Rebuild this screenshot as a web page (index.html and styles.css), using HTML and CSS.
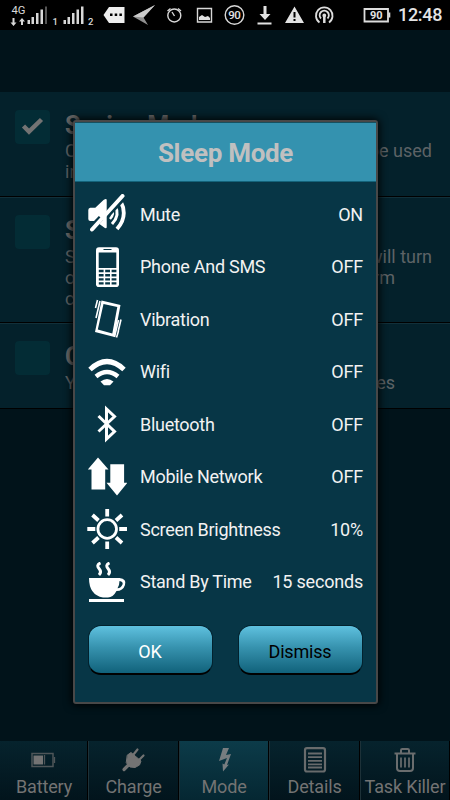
FILE: index.html
```
<!DOCTYPE html>
<html lang="en">
<head>
<meta charset="utf-8">
<title>Sleep Mode</title>
<link rel="stylesheet" href="styles.css">
</head>
<body>
<div class="screen">
  <header class="status">
    <svg class="status-icons" width="392" height="30" viewBox="0 0 392 30">
      <g fill="#d8d8d8" font-family="Roboto, sans-serif">
        <text x="11.5" y="14.300" font-size="10.500" textLength="14" lengthAdjust="spacingAndGlyphs">4G</text>
        <path d="M14.500 18v4.500h2l-3 3.500-3-3.500h2V18zM21 25v-3.500h-2l3-3.500 3 3.500h-2V25z"/>
        <path d="M27.500 20h2.500v4h-2.500zM31.500 17h2.500v7h-2.500zM36 13h2.500v11H36zM40.500 9.500H43V24h-2.500z"/>
        <path fill="#555" d="M45 6.500h2V24h-2z"/>
        <text x="52.500" y="25" font-size="9.500" font-weight="500">1</text>
        <path d="M63.500 20H66v4h-2.500zM67.500 17H70v7h-2.500zM72 13h2.500v11H72zM76.500 9.500H79V24h-2.500zM81 6.500h2.500V24H81z"/>
        <text x="88" y="25" font-size="9.500" font-weight="500">2</text>
        <path fill="#eee" d="M109 7h15.500v16H109l-5.500-8z"/>
        <path fill="#000" d="M110 13.500h2.500V16H110zM114.700 13.500h2.500V16h-2.500zM119.400 13.500h2.500V16h-2.500z"/>
        <path fill="#909090" d="M155 5l-22 11.500L148 25l-4.500-7.500z"/>
        <path fill="#ccc" d="M155 5l-22 11.500 10.500 1z"/>
      </g>
      <g fill="none" stroke="#d8d8d8" stroke-width="1.400">
        <circle cx="174.300" cy="15.500" r="6.500"/>
        <path d="M167.500 11l3-2.500M181 11l-3-2.500M172 12l2.500 4"/>
        <path d="M197.500 8.500h14v13.500h-14z"/>
        <circle cx="234.500" cy="15" r="9.300"/>
      </g>
      <path fill="#e2e2e2" d="M199 20v-3l3-2 3 2 3-1 2 2v2z"/>
      <text x="228.300" y="19" font-size="11.500" font-weight="500" fill="#e2e2e2" textLength="12.500">90</text>
      <path fill="#e2e2e2" d="M263.500 6h3v8h4l-5.500 6-5.500-6h4zM257.500 22.500h14V24.500h-14zM294.500 6.500l9.500 16.500h-19z"/>
      <path stroke="#000" stroke-width="2" d="M294.500 12v5.500M294.500 19v2"/>
      <g fill="none" stroke="#ddd" stroke-width="1.800">
        <path d="M319.500 22.500a8.300 8.300 0 1 1 9.500 0M321 18.500a4.600 4.600 0 1 1 6.500 0"/>
        <circle cx="324.300" cy="15.500" r="1" />
        <path d="M324.300 17v6" stroke-width="2.500"/>
        <path d="M364.500 9h23.500v12.500h-23.500z"/>
      </g>
      <path fill="#ddd" d="M388.500 12.500h1.800v5h-1.800z"/>
      <text x="370" y="19.200" font-size="11" font-weight="700" fill="#e2e2e2" textLength="12.500">90</text>
    </svg>
    <span class="clock">12:48</span>
  </header>

  <main class="modes">
    <section class="mode mode-1">
      <span class="box"><svg width="35" height="34" viewBox="0 0 35 34"><path d="M8.500 16l5.500 5.500L26.500 9.500" fill="none" stroke="#737373" stroke-width="4.500"/></svg></span>
      <div class="info"><h2>Saving Mode</h2>
        <p><span>C</span><span>be used</span></p><p><span>in</span></p></div>
    </section>
    <section class="mode mode-2">
      <span class="box"></span>
      <div class="info"><h2>S</h2>
        <p><span>S</span><span>will turn</span></p><p class="mid"><span>o</span><span>rm</span></p><p><span>c</span></p></div>
    </section>
    <section class="mode mode-3">
      <span class="box"></span>
      <div class="info"><h2>C</h2><p class="mid"><span>Y</span><span>es</span></p></div>
    </section>
  </main>

  <nav class="tabs">
    <div class="tab">
      <svg width="30" height="30" viewBox="0 0 30 30"><path d="M3 8.500h21v13H3z" fill="none" stroke="#4e5558" stroke-width="1.500"/><path d="M4.500 10.500h9.500v9H4.500z" fill="#737373"/><path d="M15.500 10v9.500M25.500 12v6" stroke="#4e5558" stroke-width="1.300"/></svg>
      <span>Battery</span></div>
    <div class="tab">
      <svg width="30" height="30" viewBox="0 0 30 30"><g stroke="#737373" stroke-linecap="round" fill="#737373"><path d="M14.500 9.500l4-5M20 15l4.500-4.500" stroke-width="2.200"/><path d="M8.500 10l3.500-2.500 10 8.500-1.500 4-4.500 2.500-5-.5-3.500-4z"/><path d="M9.500 20L5 24.500" stroke-width="3.200"/></g></svg>
      <span>Charge</span></div>
    <div class="tab active">
      <svg width="30" height="30" viewBox="0 0 30 30"><path d="M14 3h6l-3 7 5-1-4 11 2-.5-6 7-.5-8 1.800 1L18 13l-8 3z" fill="#777d80"/></svg>
      <span>Mode</span></div>
    <div class="tab">
      <svg width="30" height="30" viewBox="0 0 30 30"><rect x="5" y="3.200" width="20" height="23.300" rx="2" fill="none" stroke="#686b6c" stroke-width="2.200"/><path d="M8 8.500h14M8 12.200h14M8 15.800h14M8 19.300h14M8 22.500h14" stroke="#686b6c" stroke-width="1.800"/></svg>
      <span>Details</span></div>
    <div class="tab">
      <svg width="30" height="30" viewBox="0 0 30 30"><g fill="none" stroke="#6a6d6e" stroke-width="2"><path d="M4.500 8.500h21M11 7.500V5.300q0-1.300 1.300-1.300h5.400q1.300 0 1.300 1.300v2.200M7 9.500V23q0 3 3 3h10q3 0 3-3V9.500"/><path d="M11 12.500v10M15 12.500v10M19 12.500v10" stroke-width="1.700"/></g></svg>
      <span>Task Killer</span></div>
  </nav>

  <div class="dialog">
    <h1>Sleep Mode</h1>
    <ul class="rows">
      <li><svg viewBox="0 0 40 40"><g fill="none" stroke="#fff"><path d="M24 14.500q4 5-1 10.500" stroke-width="2.500"/><path d="M28 12q5.500 9-3 18" stroke-width="3"/><path d="M33.500 7q8 15-3.500 28" stroke-width="3.800"/></g><path d="M22 18.500L36.500 3" stroke="#073646" stroke-width="6.500"/><path fill="#fff" d="M1.300 16q0-2 2-2.200h5L16.500 6q3.200-2 3.200 0v27q0 2.500-3.200 0L8.300 27h-5q-2-.2-2-2z"/><path d="M3.500 35L14 24" stroke="#073646" stroke-width="6"/><path d="M5 35.500L35.500 2" stroke="#fff" stroke-width="4" stroke-linecap="round"/></svg><span>Mute</span><b>ON</b></li>
      <li><svg viewBox="0 0 40 40"><rect x="9" y=".2" width="23" height="40" rx="3" fill="#fff"/><path fill="#073646" d="M11.700 5.500h17.600v15.500H11.700zM16.500 2h8v1h-8zM11.800 22.800h4.800v2.500h-4.800zM18.200 22.800H23v2.500h-4.800zM24.600 22.800h4.800v2.500h-4.800zM11.800 27h4.800v2.500h-4.800zM18.200 27H23v2.500h-4.800zM24.600 27h4.800v2.500h-4.800zM11.800 31.200h4.800v2.300h-4.800zM18.200 31.200H23v2.300h-4.800zM24.600 31.200h4.800v2.300h-4.800zM11.800 35.200h4.800v2.300h-4.800zM18.200 35.200H23v2.300h-4.800zM24.600 35.200h4.800v2.300h-4.800z"/></svg><span>Phone And SMS</span><b>OFF</b></li>
      <li><svg viewBox="0 0 40 40"><path fill="#fff" fill-rule="evenodd" d="M14.500 1.500L33.500 6l-6 32L8 33zM16.500 5L10.800 30.500l14.500 4L30.300 8z"/><path d="M10.500 1L8.500 9M13 2L9 19M31.500 21l-4 17M34 20.500L31 33M31.500 32l-2 6.500" stroke="#fff" stroke-width="1.600"/></svg><span>Vibration</span><b>OFF</b></li>
      <li><svg viewBox="0 0 40 40"><g fill="none" stroke="#fff"><path d="M3 17.500Q20 1.500 37 17.500" stroke-width="5"/><path d="M9 24.500q11-9 22 0" stroke-width="4.500"/></g><path d="M13.500 29.500q6.500-5 13 0l-3.500 3.700h-6z" fill="#fff"/></svg><span>Wifi</span><b>OFF</b></li>
      <li><svg viewBox="0 0 40 40"><path d="M11.500 12L27.500 27.500l-8 7.500V5l8 7.500L11.500 27.500" fill="none" stroke="#fff" stroke-width="3"/></svg><span>Bluetooth</span><b>OFF</b></li>
      <li><svg viewBox="0 0 40 40"><path fill="#fff" d="M11 .5L21.500 12.500h-3.300V32.500H4.500V12.500H.800zM23.300 7.200h13.800v18.500h3.400L30 38.500 19.500 25.700h3.800z"/></svg><span>Mobile Network</span><b>OFF</b></li>
      <li><svg viewBox="0 0 40 40"><g fill="none" stroke="#fff"><circle cx="20.200" cy="20" r="9.300" stroke-width="2.800"/><path d="M20.200 0v7.500M20.200 32.500V40M.300 20h8M32.200 20h8.300M5.500 6l6 5.500M35 6l-6 5.500M5.500 34l6-5.500M35 34l-6-5.500" stroke-width="3.800"/></g></svg><span>Screen Brightness</span><b>10%</b></li>
      <li><svg viewBox="0 0 40 40"><path fill="#fff" d="M2 16h30.500q7.500 1 5.500 7-2 6-8.500 6-3.500 6.500-8.500 6.500h-5Q2 33 2 16zM2 37h35v3H2z"/><path fill="#073646" d="M32.500 19q4 .5 3 3.500-1.500 3.500-5 3.800 2-3.300 2-7.300z"/><path d="M13.500 1q-4.500 2-1.500 5.500t0 6.500M22.500 1q-4.500 2-1.500 5.500t0 6.500" fill="none" stroke="#fff" stroke-width="3"/></svg><span>Stand By Time</span><b>15 seconds</b></li>
    </ul>
    <div class="actions">
      <button class="ok">OK</button>
      <button>Dismiss</button>
    </div>
  </div>
</div>
</body>
</html>
```
FILE: styles.css
```
* { box-sizing: border-box; }
body { margin: 0; background: #01131a; font-family: Roboto, sans-serif; }
h1, h2, p, ul { margin: 0; padding: 0; }
svg { display: block; flex: none; }
.screen { position: relative; width: 450px; height: 800px; display: flex; flex-direction: column; overflow: hidden; }

.status { height: 30px; background: #000; display: flex; align-items: center; }
.clock { margin-left: 6px; color: #e4e4e4; font-size: 18px; font-weight: 500; line-height: 30px; letter-spacing: -.3px; }

.modes { flex: 1; padding-top: 62px; }
.mode { display: flex; gap: 15px; padding: 17px 18px 0 15px; background: #04212b; border-top: 1px solid #12303a; border-bottom: 1px solid #000; }
.mode-1 { height: 105px; border-top-color: #04212b; }
.mode-2 { height: 126px; }
.mode-3 { height: 86px; }
.box { width: 35px; height: 34px; border-radius: 4px; background: #032c35; flex: none; }
.info { flex: 1; color: #5d6366; }
.info h2 { font-size: 25px; line-height: 30px; font-weight: 700; color: #696969; }
.info p { display: flex; justify-content: space-between; font-size: 18px; line-height: 21px; }
.info p.mid { padding-right: 37px; }
.mode-1 .info { margin-top: 1px; }
.mode-1 .info p:nth-of-type(1) { margin-top: -1px; }
.mode-2 .info, .mode-3 .info { margin-top: 1px; }

.tabs { height: 59px; display: grid; grid-template-columns: 88px 91px 90px 91px 90px; }
.tab { display: flex; flex-direction: column; align-items: center; padding-top: 4px; background: linear-gradient(#06232d, #02141c); border-left: 1px solid #1d3138; border-right: 1px solid #000; color: #737373; font-size: 18px; line-height: 24px; letter-spacing: -.15px; white-space: nowrap; }
.tab:first-child { border-left-color: transparent; }
.tab.active { background: linear-gradient(#0c3b49, #052732); }

.dialog { position: absolute; left: 73px; top: 120px; width: 305px; height: 584px; border: 2px solid #484848; border-radius: 3px; background: #073646; box-shadow: 0 0 9px 1px #000; color: #f2f2f2; }
.dialog h1 { height: 60px; background: #3492af; border-top: 1px solid #17505f; border-bottom: 1px solid #14647b; color: #c0c0c0; font-size: 26px; font-weight: 700; line-height: 60px; letter-spacing: -.3px; text-align: center; }
.rows { list-style: none; padding: 6px 13px 0 12px; font-size: 18px; letter-spacing: -.28px; }
.rows li { height: 52.5px; display: flex; align-items: center; }
.rows svg { width: 40px; height: 40px; margin-right: 13px; }
.rows span { flex: 1; }
.rows b { font-weight: 400; letter-spacing: -.2px; }
.actions { display: flex; justify-content: space-between; padding: 17px 13.5px 0 12.5px; }
.actions button { width: 125px; height: 50px; border: 1px solid #02222e; border-bottom: 2px solid #000; border-radius: 13px; background: linear-gradient(#5fc1df, #3793af 45%, #11627b); color: #000; font: 18px/44px Roboto, sans-serif; letter-spacing: -.2px; padding: 4px 0 0; }
.actions .ok { color: #fff; }
```
